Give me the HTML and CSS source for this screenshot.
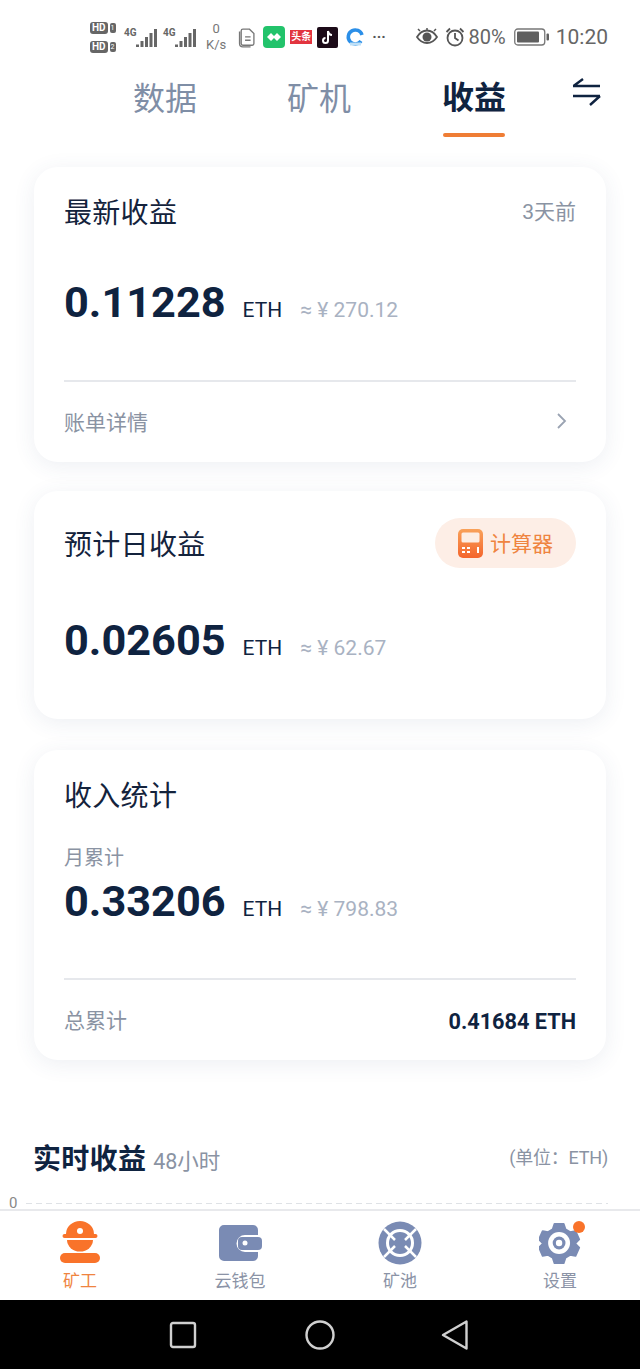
FILE: index.html
```html
<!DOCTYPE html>
<html lang="zh">
<head>
<meta charset="utf-8">
<title>收益</title>
<link rel="stylesheet" href="styles.css">
</head>
<body>
<div class="app">
  <div class="status">
    <div class="sims">
      <div class="sim"><span class="hd">HD</span><span class="simn">1</span></div>
      <div class="sim"><span class="hd">HD</span><span class="simn">2</span></div>
    </div>
    <div class="signal"><span class="g">4G</span><svg width="22" height="20" viewBox="0 0 22 20"><path d="M1 16.500h3V19H1zM5.500 13h3v6h-3zM10 9h3v10h-3zM14.500 5h3v14h-3zM19 1h3v18h-3z" fill="#666"/></svg></div>
    <div class="signal"><span class="g">4G</span><svg width="22" height="20" viewBox="0 0 22 20"><path d="M1 16.500h3V19H1zM5.500 13h3v6h-3zM10 9h3v10h-3zM14.500 5h3v14h-3zM19 1h3v18h-3z" fill="#666"/></svg></div>
    <div class="speed"><span>0</span><span>K/s</span></div>
    <svg class="ic-doc" width="18" height="21" viewBox="2 1 15.500 19"><path d="M6 3h6l4 4v9a1.500 1.500 0 0 1-1.500 1.500h-8.500a1.500 1.500 0 0 1-1.500-1.500V4.500A1.500 1.500 0 0 1 6 3zM3 5v11a3 3 0 0 0 3 3h7M8 10h5M8 13h5" fill="none" stroke="#777" stroke-width="1.200"/></svg>
    <svg class="ic-green" width="22" height="22" viewBox="0 0 22 22"><rect width="22" height="22" rx="4" fill="#22c36b"/><path d="M4 11l4-4 3 3 3-3 4 4-4 4-3-3-3 3z" fill="#fff"/></svg>
    <span class="toutiao">头条</span>
    <svg class="ic-tt" width="21" height="21" viewBox="0 0 21 21"><rect width="21" height="21" rx="2" fill="#1c0b18"/><path d="M11 4v9.500a2.500 2.500 0 1 1-2.500-2.500M11 4c.4 2.400 1.800 3.800 4 4" fill="none" stroke="#fff" stroke-width="2"/></svg>
    <svg class="ic-q" width="20" height="20" viewBox="0 0 20 20"><path d="M16 14a7 7 0 1 1 1-6" fill="none" stroke="#2b8fe8" stroke-width="3.500"/><path d="M5 17h11" stroke="#bfe0f7" stroke-width="3"/></svg>
    <span class="dots">···</span>
    <div class="status-right">
      <svg class="ic-eye" width="22" height="18" viewBox="0 0 22 18"><path d="M1 9c3-5 6-6.500 10-6.500S18 4 21 9c-3 4.500-6 6-10 6S4 13.500 1 9z" fill="none" stroke="#555" stroke-width="1.800"/><circle cx="11" cy="9" r="4.500" fill="#555"/><path d="M4 3L2 1M11 2V0M18 3l2-2" stroke="#555" stroke-width="1.500"/></svg>
      <svg class="ic-alarm" width="20" height="20" viewBox="0 0 20 20"><circle cx="10" cy="11" r="7.500" fill="none" stroke="#555" stroke-width="1.800"/><path d="M10 6v5l3.500 2.500M1.500 5L5 1.500M18.500 5L15 1.500" fill="none" stroke="#555" stroke-width="1.800"/></svg>
      <span class="pct">80%</span>
      <svg class="ic-bat" width="36" height="18" viewBox="0 0 36 18"><rect x=".75" y="1" width="30" height="16" rx="3" fill="none" stroke="#777" stroke-width="1.300"/><rect x="3" y="3.500" width="22" height="11" rx="1" fill="#606060"/><rect x="32.500" y="5.500" width="2.500" height="7" rx="1" fill="#606060"/></svg>
      <span class="time">10:20</span>
    </div>
  </div>

  <div class="tabs">
    <span class="tab">数据</span>
    <span class="tab">矿机</span>
    <span class="tab active">收益</span>
    <svg class="swap" width="30" height="28" viewBox="0 0 30 28"><path d="M1 8h27M11 1L1.500 8M1 18h27M18 27l10-9" fill="none" stroke="#0f2340" stroke-width="2.400"/></svg>
  </div>

  <main class="content">
    <section class="card card-latest">
      <div class="card-head"><h2>最新收益</h2><span class="muted">3天前</span></div>
      <div class="amount a1"><strong>0.11228</strong><span class="unit">ETH</span><span class="fiat">≈ ¥ 270.12</span></div>
      <div class="divider d1"></div>
      <div class="foot foot1"><span class="foot-l">账单详情</span><svg width="12" height="18" viewBox="0 0 12 18"><path d="M2 2l7 7-7 7" fill="none" stroke="#9aa3b2" stroke-width="1.800"/></svg></div>
    </section>

    <section class="card card-daily">
      <div class="card-head"><h2>预计日收益</h2>
        <div class="calc">
          <svg width="25" height="29" viewBox="0 0 25 29"><defs><linearGradient id="cg" x1="0" y1="0" x2="0" y2="1"><stop offset="0" stop-color="#f9a25a"/><stop offset="1" stop-color="#f4652c"/></linearGradient></defs><rect width="25" height="29" rx="5" fill="url(#cg)"/><rect x="3.500" y="3.500" width="18" height="10" rx="1.500" fill="#fdeee4"/><path d="M4 18h3v2H4zM9 18h3v2H9zM4 22h3v2H4zM9 22h3v2H9zM19 18h2v6h-2z" fill="#fff"/></svg>
          <span>计算器</span>
        </div>
      </div>
      <div class="amount a2"><strong>0.02605</strong><span class="unit">ETH</span><span class="fiat">≈ ¥ 62.67</span></div>
    </section>

    <section class="card card-stats">
      <div class="card-head"><h2>收入统计</h2></div>
      <div class="month">月累计</div>
      <div class="amount a3"><strong>0.33206</strong><span class="unit">ETH</span><span class="fiat">≈ ¥ 798.83</span></div>
      <div class="divider d3"></div>
      <div class="foot foot3"><span class="foot-l">总累计</span><b>0.41684 ETH</b></div>
    </section>

    <section class="realtime">
      <div class="rt-head">
        <div class="rt-title"><h3>实时收益</h3><span>48小时</span></div>
        <span class="rt-unit">(单位：ETH)</span>
      </div>
      <div class="chart"><span>0</span><i></i></div>
    </section>
  </main>

  <nav class="tabbar">
    <div class="item on">
      <svg width="40" height="44" viewBox="0 0 40 44"><path d="M6 13a14 13 0 0 1 28 0h1.500a2 2 0 0 1 0 4h-31a2 2 0 0 1 0-4z" fill="#f9732a"/><path d="M7 19h26a13 11.500 0 0 1-26 0z" fill="#f9732a"/><circle cx="20" cy="10" r="3" fill="#fff"/><rect y="32" width="40" height="10" rx="5" fill="#f9732a"/></svg>
      <span>矿工</span>
    </div>
    <div class="item">
      <svg width="44" height="36" viewBox="0 0 44 36"><path d="M6 0h29a5 5 0 0 1 5 5v5H27a8 8 0 0 0 0 17h13v4a5 5 0 0 1-5 5H6a5 5 0 0 1-5-5V5a5 5 0 0 1 5-5z" fill="#7a8bb4"/><rect x="20" y="12" width="24" height="13" rx="4" fill="#7a8bb4"/><circle cx="27" cy="18" r="2.500" fill="#fff"/></svg>
      <span>云钱包</span>
    </div>
    <div class="item">
      <svg width="44" height="44" viewBox="0 0 44 44"><circle cx="22" cy="22" r="21.500" fill="#7a8bb4"/><circle cx="22" cy="22" r="12.500" fill="none" stroke="#fff" stroke-width="3"/><circle cx="22" cy="22" r="7" fill="#7a8bb4"/><path d="M6 8l11 11M38 8L27 19M6 36l11-11M38 36L27 25" stroke="#fff" stroke-width="2.500"/></svg>
      <span>矿池</span>
    </div>
    <div class="item">
      <svg width="42" height="44" viewBox="0 0 46 44"><path d="M17 1h10l2 6 5 3 6-1 4 9-4 4 0 1 4 4-4 9-6-1-5 3-2 6H17l-2-6-5-3-6 1-4-9 4-4v-1l-4-4 4-9 6 1 5-3z" fill="#7a8bb4" stroke="#7a8bb4" stroke-linejoin="round" stroke-width="2"/><circle cx="22" cy="22" r="12" fill="#fff"/><circle cx="22" cy="22" r="7" fill="#7a8bb4"/><circle cx="22" cy="22" r="3.500" fill="#fff"/></svg>
      <i class="dot"></i>
      <span>设置</span>
    </div>
  </nav>

  <div class="navbar">
    <svg width="28" height="28" viewBox="0 0 28 28"><rect x="2" y="2" width="24" height="24" rx="2" fill="none" stroke="#d0d0d0" stroke-width="2.400"/></svg>
    <svg width="30" height="30" viewBox="0 0 30 30"><circle cx="15" cy="15" r="13.500" fill="none" stroke="#d0d0d0" stroke-width="2.400"/></svg>
    <svg width="28" height="32" viewBox="0 0 28 32"><path d="M25.500 2.500v27L2 16z" fill="none" stroke="#d0d0d0" stroke-width="2.400" stroke-linejoin="round"/></svg>
  </div>
</div>
</body>
</html>
```
FILE: styles.css
```css
* { box-sizing: border-box; }
html, body { margin: 0; padding: 0; }
body { width: 640px; height: 1369px; overflow: hidden; background: #fff; font-family: Roboto, "Noto Sans CJK SC", sans-serif; color: #0f2340; }
.app { width: 640px; height: 1369px; display: flex; flex-direction: column; position: relative; }

.status { height: 70px; display: flex; align-items: center; padding: 4px 32px 0 90px; color: #666; flex: none; }
.sims { display: flex; flex-direction: column; gap: 6px; width: 34px; flex: none; }
.sim { display: flex; align-items: center; gap: 2px; height: 13px; }
.hd { background: #666; color: #fff; font-size: 10px; font-weight: 700; line-height: 12px; padding: 0 2px; border-radius: 3px; }
.simn { background: #666; color: #fff; font-size: 7px; line-height: 10px; padding: 0 1px; border-radius: 2px; }
.signal { display: flex; align-items: flex-start; width: 39px; flex: none; }
.signal svg { margin-left: -3px; margin-top: 1px; }
.g { font-size: 10px; font-weight: 700; line-height: 12px; width: 14px; }
.speed { display: flex; flex-direction: column; align-items: center; font-size: 13px; line-height: 16px; margin: 0 12px 0 4px; color: #777; }
.ic-doc { margin-right: 7px; flex: none; }
.ic-green { margin-right: 5px; flex: none; }
.ic-tt { margin-right: 7px; flex: none; }
.ic-q { margin-right: 7px; flex: none; }
.toutiao { background: #e2343f; color: #fff; font-size: 10px; font-weight: 700; line-height: 14px; width: 22px; text-align: center; margin-right: 5px; white-space: nowrap; overflow: hidden; flex: none; }
.dots { color: #555; font-size: 15px; font-weight: 700; line-height: 14px; }
.status-right { margin-left: auto; display: flex; align-items: center; }
.ic-eye { margin-right: 7px; }
.ic-alarm { margin-right: 4px; }
.ic-bat { margin-left: 8px; }
.pct { font-size: 20px; color: #666; }
.time { font-size: 21px; color: #666; margin-left: 6px; }

.tabs { height: 70px; flex: none; display: flex; position: relative; padding-left: 133px; gap: 90px; font-family: "Noto Sans CJK SC", sans-serif; }
.tab { font-size: 32px; line-height: 52px; color: #7f8ea6; position: relative; height: 67px; width: 64px; white-space: nowrap; }
.tab.active { color: #0f2340; font-weight: 700; line-height: 50px; margin-left: 1px; }
.tab.active::after { content: ""; position: absolute; left: 1px; right: 1px; bottom: 0; height: 4px; border-radius: 2px; background: #ef7d35; }
.swap { position: absolute; left: 572px; top: 8px; }

.content { flex: 1; min-height: 0; padding: 27px 34px 0; display: flex; flex-direction: column; font-family: Roboto, "Noto Sans CJK SC", sans-serif; }
.card { background: #fff; border-radius: 24px; box-shadow: 0 4px 22px rgba(60, 80, 120, .09); padding: 0 30px; flex: none; }
.card-latest { height: 295px; margin-bottom: 29px; }
.card-daily { height: 228px; margin-bottom: 31px; }
.card-stats { height: 310px; }
.card-head { display: flex; justify-content: space-between; align-items: center; height: 90px; }
.card-daily .card-head { height: 104px; }
h2 { margin: 0 0 2px; font-size: 28px; letter-spacing: .3px; font-weight: 400; color: #14233c; font-family: "Noto Sans CJK SC", sans-serif; }
.card-daily h2 { margin-bottom: 0; }
.muted { color: #8a93a3; font-size: 21px; margin-bottom: 4px; font-family: Roboto, "Noto Sans CJK SC", sans-serif; }
.amount { display: flex; align-items: baseline; }
.amount strong { font-size: 43.300px; font-weight: 700; line-height: 52px; color: #0f2340; }
.unit { font-size: 21px; color: #0f2340; margin-left: 17px; }
.fiat { font-size: 21px; color: #a9b2c2; margin-left: 18px; }
.a1 { margin-top: 20px; }
.a2 { margin-top: 20px; }
.a3 { margin-top: 5px; }
.divider { height: 2px; background: #e6e8ec; }
.d1 { margin-top: 51px; }
.d3 { margin-top: 50px; }
.foot { display: flex; justify-content: space-between; align-items: center; height: 80px; }
.foot1 { height: 78px; }
.foot svg { margin-right: 8px; }
.foot-l { font-size: 21px; color: #8a93a3; font-family: "Noto Sans CJK SC", sans-serif; }
.foot3 .foot-l { margin-bottom: 2px; }
.foot b { font-size: 21.700px; font-weight: 700; color: #0f2340; margin-top: 2px; }
.calc { width: 141px; height: 50px; border-radius: 25px; background: #fdeee6; display: flex; align-items: center; padding-left: 23px; gap: 7px; }
.calc span { color: #ef8440; font-size: 21px; margin-bottom: 2px; font-family: "Noto Sans CJK SC", sans-serif; }
.month { font-size: 20px; color: #8a93a3; line-height: 28px; margin-top: 3px; font-family: "Noto Sans CJK SC", sans-serif; }

.realtime { margin: 0 -2px 0 -1px; flex: none; padding-top: 76px; }
.rt-head { display: flex; justify-content: space-between; align-items: center; height: 42px; }
.rt-title { display: flex; align-items: baseline; gap: 7px; }
h3 { margin: 0; font-size: 28px; letter-spacing: .3px; font-weight: 700; color: #0f2340; font-family: "Noto Sans CJK SC", sans-serif; line-height: 42px; }
.rt-title span { font-size: 21.500px; color: #8a93a3; font-family: Roboto, "Noto Sans CJK SC", sans-serif; }
.rt-unit { font-size: 18px; letter-spacing: -.2px; color: #8a93a3; margin-top: -2px; font-family: Roboto, "Noto Sans CJK SC", sans-serif; }
.chart { display: flex; align-items: center; margin: 15px 0 0 -24px; height: 20px; gap: 9px; }
.chart span { font-size: 15px; color: #888; width: 8px; }
.chart i { flex: 1; height: 1px; background: repeating-linear-gradient(90deg, #dfe2e6 0 6px, transparent 6px 10px); }

.tabbar { position: absolute; left: 0; top: 1209px; width: 640px; height: 91px; background: #fff; border-top: 2px solid #e8e9ec; display: grid; grid-template-columns: repeat(4, 160px); font-family: "Noto Sans CJK SC", sans-serif; }
.item { display: flex; flex-direction: column; align-items: center; position: relative; padding-top: 10px; }
.item svg { height: 44px; flex: none; }
.item span { font-size: 17px; line-height: 24px; color: #8b93a6; margin-top: 3px; }
.item.on span { color: #ef8440; }
.dot { position: absolute; left: 93px; top: 10px; width: 12px; height: 12px; border-radius: 50%; background: #f9732a; }

.navbar { position: absolute; left: 0; top: 1300px; width: 640px; height: 69px; background: #000; display: grid; grid-template-columns: 183px 137px 135px; justify-items: center; align-items: center; }
.navbar svg:nth-child(1) { justify-self: end; margin-right: -14px; }
.navbar svg:nth-child(2) { justify-self: end; margin-right: -15px; }
.navbar svg:nth-child(3) { justify-self: end; margin-right: -14px; }
```
